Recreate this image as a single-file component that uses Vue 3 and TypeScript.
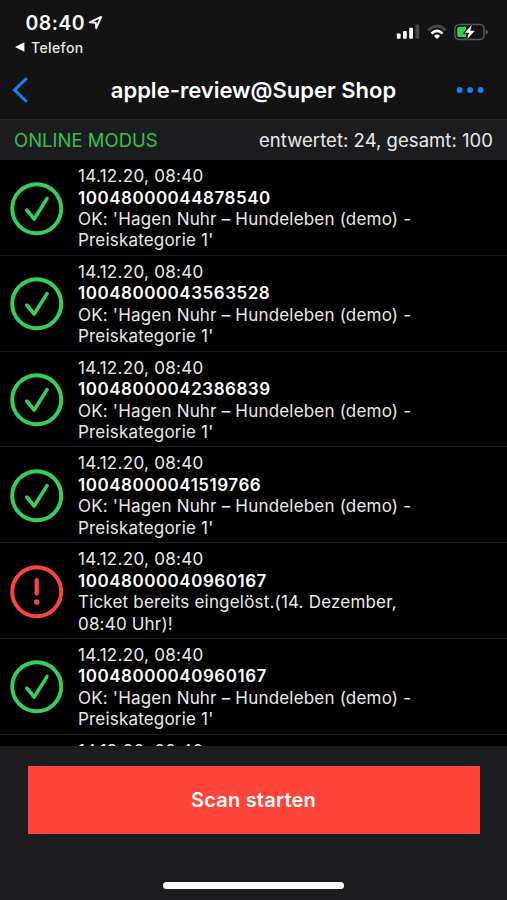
<script setup lang="ts">
interface ScanEntry {
  time: string
  code: string
  lines: string[]
  ok: boolean
}

const show = ["OK: 'Hagen Nuhr – Hundeleben (demo) -", "Preiskategorie 1'"]

const entries: ScanEntry[] = [
  { time: '14.12.20, 08:40', code: '10048000044878540', lines: show, ok: true },
  { time: '14.12.20, 08:40', code: '10048000043563528', lines: show, ok: true },
  { time: '14.12.20, 08:40', code: '10048000042386839', lines: show, ok: true },
  { time: '14.12.20, 08:40', code: '10048000041519766', lines: show, ok: true },
  {
    time: '14.12.20, 08:40',
    code: '10048000040960167',
    lines: ['Ticket bereits eingelöst.(14. Dezember,', '08:40 Uhr)!'],
    ok: false,
  },
  { time: '14.12.20, 08:40', code: '10048000040960167', lines: show, ok: true },
  { time: '14.12.20, 08:40', code: '', lines: [], ok: true },
]
</script>

<template>
  <div class="screen">
    <header class="top">
      <div class="status">
        <div class="status-left">
          <div class="clock">
            <span class="time">08:40</span>
            <svg class="location" width="16" height="16" viewBox="0 0 16 16">
              <path d="M1.7 7.3 13.2 1.9 8.2 13.2 7.8 7.8Z" />
            </svg>
          </div>
          <div class="return">
            <svg width="10" height="10" viewBox="0 0 10 10"><path d="M0 5 9.4.3V9.7Z" fill="#fff" /></svg>
            <span>Telefon</span>
          </div>
        </div>
        <div class="status-right">
          <svg width="24" height="16" viewBox="0 0 24 16">
            <rect x=".8" y="9.4" width="3.8" height="5.3" rx=".9" fill="#fff" />
            <rect x="7" y="7" width="3.8" height="7.7" rx=".9" fill="#fff" />
            <rect x="13.2" y="3.7" width="3.8" height="11" rx=".9" fill="#fff" />
            <rect x="19.4" y=".5" width="3.8" height="14.2" rx=".9" fill="#48484a" />
          </svg>
          <svg class="wifi" width="20" height="16" viewBox="0 0 20 16">
            <path d="M1.2 6.2Q10-2 18.8 6.2" fill="none" stroke="#48484a" stroke-width="2.7" />
            <path d="M4.5 9.5Q10 4.4 15.5 9.5" fill="none" stroke="#fff" stroke-width="2.7" />
            <path d="M6.9 12Q10 9.2 13.1 12L10 15Z" fill="#fff" />
          </svg>
          <svg class="battery" width="35" height="18" viewBox="0 0 35 18">
            <rect x=".9" y="1.4" width="29.2" height="15" rx="4.4" fill="none" stroke="#59595c" stroke-width="1.5" />
            <path d="M31.7 6.4Q34 7 34 9T31.7 11.5Z" fill="#59595c" />
            <path d="M5 3.7H12V14.1H5Q3.2 14.1 3.2 12.3V5.5Q3.2 3.7 5 3.7Z" fill="#30d158" />
            <path
              d="M17.9 1.8 10.7 9.8H15.1L13.1 16.2 20.8 7.7H16.2Z"
              fill="#fff"
              stroke="#131314"
              stroke-width="2"
              paint-order="stroke"
            />
          </svg>
        </div>
      </div>
      <nav class="nav">
        <svg class="back" width="18" height="28" viewBox="0 0 18 28">
          <path d="M14.7 2.2 2.6 14 14.7 25.8" fill="none" stroke="#1285f5" stroke-width="3" />
        </svg>
        <h1>apple-review@Super Shop</h1>
        <svg class="more" width="28" height="8" viewBox="0 0 28 8">
          <circle cx="3.6" cy="4" r="2.9" fill="#1285f5" />
          <circle cx="14.1" cy="4" r="2.9" fill="#1285f5" />
          <circle cx="24.6" cy="4" r="2.9" fill="#1285f5" />
        </svg>
      </nav>
    </header>

    <div class="mode">
      <span class="online">ONLINE MODUS</span>
      <span class="count">entwertet: 24, gesamt: 100</span>
    </div>

    <main class="list">
      <article v-for="(entry, i) in entries" :key="i" class="row">
        <svg class="badge" :class="{ error: !entry.ok }" width="54" height="54" viewBox="0 0 54 54">
          <circle cx="26.7" cy="26.7" r="24.5" stroke-width="3.9" />
          <path v-if="entry.ok" d="M16.8 28.2 24.2 37 37 16.6" stroke-width="3.6" />
          <template v-else>
            <path d="M26.7 15.2V28.6" stroke-width="4.2" />
            <circle class="dot" cx="26.7" cy="37" r="2.8" />
          </template>
        </svg>
        <div class="text">
          <div class="date">{{ entry.time }}</div>
          <div class="code">{{ entry.code }}</div>
          <div v-for="line in entry.lines" :key="line" class="message">{{ line }}</div>
        </div>
      </article>
    </main>

    <footer class="bottom">
      <button type="button" class="scan">Scan starten</button>
      <div class="home"></div>
    </footer>
  </div>
</template>

<style>
body {
  background: #000;
}
</style>

<style scoped>
.screen {
  display: flex;
  flex-direction: column;
  width: 507px;
  height: 900px;
  overflow: hidden;
  background: #000;
  color: #e9e9ea;
  font-family: Inter, 'Liberation Sans', sans-serif;
}
.screen svg {
  display: block;
  flex: none;
}
.top {
  flex: none;
  box-sizing: border-box;
  height: 120px;
  background: #131314;
  border-bottom: 1px solid #29292b;
}
.status {
  display: flex;
  justify-content: space-between;
  height: 60px;
}
.status-left {
  padding: 11px 0 0 15px;
}
.clock {
  display: flex;
  align-items: center;
  height: 24px;
  padding-left: 10.5px;
}
.time {
  width: 62px;
  font-size: 19.5px;
  font-weight: 600;
  letter-spacing: 0.4px;
  color: #fff;
}
.location {
  fill: none;
  stroke: #f4f4f4;
  stroke-width: 1.9;
  stroke-linejoin: round;
}
.return {
  display: flex;
  align-items: center;
  gap: 6px;
  height: 24px;
  font-size: 14px;
  font-weight: 500;
  letter-spacing: 0.4px;
}
.status-right {
  display: flex;
  align-items: center;
  height: 18px;
  padding: 23px 18px 0 0;
}
.wifi {
  margin-left: 7px;
}
.battery {
  margin-left: 7px;
}
.nav {
  display: grid;
  grid-template-columns: 60px 1fr 60px;
  align-items: center;
  height: 60px;
}
.back {
  margin-left: 12px;
}
.more {
  margin-left: 9px;
}
h1 {
  margin: 0;
  text-align: center;
  font-size: 22px;
  font-weight: 600;
  color: #fff;
}
.mode {
  display: flex;
  flex: none;
  align-items: center;
  justify-content: space-between;
  height: 40px;
  padding: 0 14px;
  background: #1c1c1e;
  font-size: 18.5px;
}
.online {
  color: #32c355;
}
.count {
  letter-spacing: 0.04px;
}
.list {
  flex: none;
  height: 586px;
  overflow: hidden;
}
.row {
  display: flex;
  box-sizing: border-box;
  height: 95.8px;
  border-bottom: 1px solid #1b1b1c;
  padding: 5.5px 0 0 10px;
}
.badge {
  margin-top: 16px;
  fill: none;
  stroke: #34d159;
  stroke-linecap: round;
  stroke-linejoin: round;
}
.badge.error {
  stroke: #ff453a;
}
.badge .dot {
  fill: #ff453a;
  stroke: none;
}
.text {
  padding: 0.6px 0 0 14px;
  font-size: 17px;
  line-height: 21.4px;
  white-space: nowrap;
}
.date {
  letter-spacing: 0.3px;
}
.code {
  font-weight: 600;
  letter-spacing: 0.52px;
  color: #fff;
}
.message {
  letter-spacing: 0.19px;
}
.bottom {
  display: flex;
  flex: 1;
  flex-direction: column;
  align-items: center;
  padding-top: 20px;
  background: #1c1c1e;
}
.scan {
  width: 452px;
  height: 68px;
  border: 0;
  padding: 0;
  background: #ff453a;
  color: #fff;
  font: 600 20px Inter, 'Liberation Sans', sans-serif;
  letter-spacing: 0.2px;
}
.home {
  width: 181px;
  height: 7px;
  margin-top: 48px;
  border-radius: 4px;
  background: #fff;
}
</style>
